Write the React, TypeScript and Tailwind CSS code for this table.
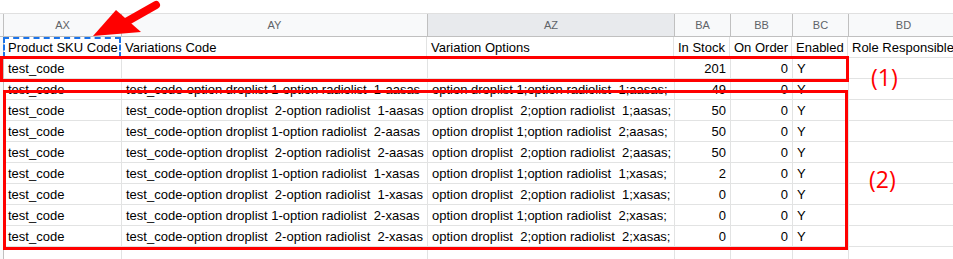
const cols = [
  { id: 'AX', w: 'w-[118px]' },
  { id: 'AY', w: 'w-[306px]' },
  { id: 'AZ', w: 'w-[247px]' },
  { id: 'BA', w: 'w-[56px]' },
  { id: 'BB', w: 'w-[62px]' },
  { id: 'BC', w: 'w-[56px]' },
  { id: 'BD', w: 'w-[110px]' },
]

const rows: string[][] = [
  ['test_code', '', '', '201', '0', 'Y', ''],
  ['test_code', 'test_code-option droplist 1-option radiolist  1-aasas', 'option droplist 1;option radiolist  1;aasas;', '49', '0', 'Y', ''],
  ['test_code', 'test_code-option droplist  2-option radiolist  1-aasas', 'option droplist  2;option radiolist  1;aasas;', '50', '0', 'Y', ''],
  ['test_code', 'test_code-option droplist 1-option radiolist  2-aasas', 'option droplist 1;option radiolist  2;aasas;', '50', '0', 'Y', ''],
  ['test_code', 'test_code-option droplist  2-option radiolist  2-aasas', 'option droplist  2;option radiolist  2;aasas;', '50', '0', 'Y', ''],
  ['test_code', 'test_code-option droplist 1-option radiolist  1-xasas', 'option droplist 1;option radiolist  1;xasas;', '2', '0', 'Y', ''],
  ['test_code', 'test_code-option droplist  2-option radiolist  1-xasas', 'option droplist  2;option radiolist  1;xasas;', '0', '0', 'Y', ''],
  ['test_code', 'test_code-option droplist 1-option radiolist  2-xasas', 'option droplist 1;option radiolist  2;xasas;', '0', '0', 'Y', ''],
  ['test_code', 'test_code-option droplist  2-option radiolist  2-xasas', 'option droplist  2;option radiolist  2;xasas;', '0', '0', 'Y', ''],
  ['', '', '', '', '', '', ''],
]

const titles = ['Product SKU Code', 'Variations Code', 'Variation Options', 'In Stock', 'On Order', 'Enabled', 'Role Responsible']

function Cell({ w, text, right }: { w: string; text: string; right?: boolean }) {
  return (
    <div
      className={`${w} shrink-0 h-full border-r border-b border-[#e2e3e3] flex items-end pb-[1px] px-[4px] whitespace-pre ${
        right ? 'justify-end' : ''
      }`}
    >
      {text}
    </div>
  )
}

export default function App() {
  return (
    <div
      className="relative w-[953px] h-[259px] overflow-hidden bg-white text-[13px] text-black leading-[16px]"
      style={{ fontFamily: '"Liberation Sans", Arial, sans-serif' }}
    >
      <div className="pt-[13px]">
        {/* column letters */}
        <div className="flex h-[24px] border-t border-[#e0e0e0]">
          <div className="w-[4px] shrink-0 bg-[#f8f9fa] border-r border-b border-[#c0c0c0]" />
          {cols.map((c) => (
            <div
              key={c.id}
              className={`${c.w} shrink-0 flex items-center justify-center border-r border-b border-[#c0c0c0] text-[11px] text-[#5f6368] ${
                c.id === 'AZ' ? 'bg-[#e8eaed]' : 'bg-[#f8f9fa]'
              }`}
            >
              {c.id}
            </div>
          ))}
        </div>

        {/* title row */}
        <div className="flex h-[21px]">
          <div className="w-[4px] shrink-0 bg-[#f8f9fa] border-r border-[#c0c0c0]" />
          <div className="w-[118px] shrink-0 h-full -ml-[1px] border-2 border-dashed border-[#1a73e8] flex items-end pl-[3px] whitespace-nowrap">
            {titles[0]}
          </div>
          {cols.slice(1).map((c, i) => (
            <Cell key={c.id} w={c.w} text={titles[i + 1]} />
          ))}
        </div>

        {rows.map((r, ri) => (
          <div key={ri} className="flex h-[21px]">
            <div className="w-[4px] shrink-0 bg-[#f8f9fa] border-r border-[#c0c0c0]" />
            {cols.map((c, i) => (
              <Cell key={c.id} w={c.w} text={r[i]} right={i === 3 || i === 4} />
            ))}
          </div>
        ))}
      </div>

      {/* annotations */}
      <div className="absolute left-0 top-[56px] w-[849px] h-[26px] border-[3px] border-[#ff0000]" />
      <div className="absolute left-[3px] top-[90px] w-[845px] h-[160px] border-[3px] border-[#ff0000]" />
      <div className="absolute left-[871px] top-[64px] text-[23px] leading-[26px] text-[#ff0000]" style={{ fontFamily: '"Open Sans", sans-serif' }}>
        (1)
      </div>
      <div className="absolute left-[869px] top-[166px] text-[23px] leading-[26px] text-[#ff0000]" style={{ fontFamily: '"Open Sans", sans-serif' }}>
        (2)
      </div>
      <svg className="absolute left-0 top-0" width="200" height="50" viewBox="0 0 200 50">
        <line x1="126" y1="22" x2="156" y2="5" stroke="#ff0000" strokeWidth="8" strokeLinecap="round" />
        <polygon points="93,36 116,10 141,32" fill="#ff0000" />
      </svg>
    </div>
  )
}
